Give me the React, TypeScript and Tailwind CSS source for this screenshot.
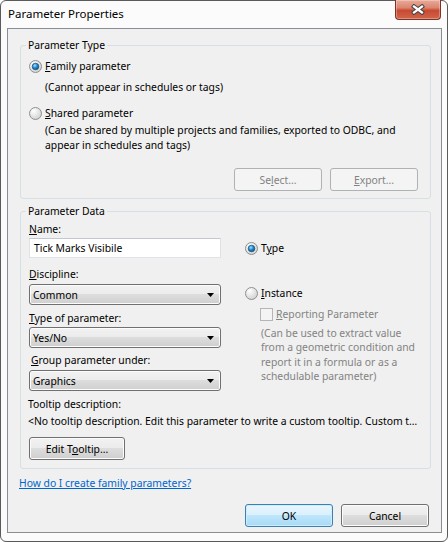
import React from "react";

const btnFace =
  "bg-[linear-gradient(to_bottom,#f2f2f2_0%,#ebebeb_50%,#dddddd_50%,#cfcfcf_100%)] shadow-[inset_0_0_0_1px_#fcfcfc]";

function Radio({ checked }: { checked?: boolean }) {
  return (
    <svg width="13" height="13" viewBox="0 0 13 13" className="shrink-0">
      <defs>
        <radialGradient id="rbFace" cx="35%" cy="30%" r="75%">
          <stop offset="0" stopColor="#ffffff" />
          <stop offset="1" stopColor="#cfd0d0" />
        </radialGradient>
        <radialGradient id="rbDot" cx="40%" cy="35%" r="70%">
          <stop offset="0" stopColor="#a6e6ff" />
          <stop offset="0.45" stopColor="#2a93d8" />
          <stop offset="1" stopColor="#0b457f" />
        </radialGradient>
      </defs>
      <circle cx="6.5" cy="6.5" r="6" fill="url(#rbFace)" stroke="#8e8f8f" />
      {checked && (
        <circle cx="6.5" cy="6.5" r="3.3" fill="url(#rbDot)" stroke="#1b4f7e" strokeWidth="0.7" />
      )}
    </svg>
  );
}

function Select({ value }: { value: string }) {
  return (
    <div
      className={`h-[21px] rounded-[3px] border border-[#707070] ${btnFace} flex items-center justify-between pl-[3px] pr-[6px]`}
    >
      <span>{value}</span>
      <svg width="7" height="4" viewBox="0 0 7 4">
        <path d="M0 0h7L3.5 4z" fill="#000" />
      </svg>
    </div>
  );
}

function Button({
  children,
  variant = "normal",
  className = "",
}: {
  children: React.ReactNode;
  variant?: "normal" | "disabled" | "default";
  className?: string;
}) {
  const look =
    variant === "disabled"
      ? "border-[#adb2b5] bg-[#f4f4f4] text-[#838383]"
      : variant === "default"
        ? "border-[#3c7fb1] bg-[linear-gradient(to_bottom,#eaf6fd_0%,#d9f0fc_50%,#bee6fd_50%,#a7d9f5_100%)] shadow-[inset_0_0_0_1px_#cdeefe]"
        : `border-[#707070] ${btnFace}`;
  return (
    <div
      className={`w-[88px] h-[23px] rounded-[3px] border flex items-center justify-center ${look} ${className}`}
    >
      {children}
    </div>
  );
}

export default function App() {
  return (
    <div className="w-[448px] h-[542px] bg-white font-['Noto_Sans',sans-serif] text-[10.35px] leading-[16px] text-black">
      <div className="h-full border border-[#5a5a5a] rounded-[6px] bg-[#fbfbfb] flex flex-col pl-[6px] pr-[5px] pb-[8px]">
        {/* Title bar */}
        <div className="h-[27px] flex items-start justify-between">
          <div className="pl-[1px] pt-[5px] text-[11.5px]">Parameter Properties</div>
          <div className="-mt-px mr-[1px] w-[46px] h-[20px] rounded-b-[4px] border border-t-0 border-[#7b3328] bg-[linear-gradient(to_bottom,#e9aa98_0%,#db8671_40%,#c84a31_55%,#d0654b_100%)] shadow-[inset_0_0_0_1px_rgba(255,255,255,0.3)] flex items-center justify-center">
            <svg width="14" height="11" viewBox="0 0 14 11">
              <path d="M3 2.5L11 8.5M11 2.5L3 8.5" stroke="#454545" strokeWidth="4.2" strokeLinecap="square" />
              <path d="M3 2.5L11 8.5M11 2.5L3 8.5" stroke="#ffffff" strokeWidth="2.2" strokeLinecap="square" />
            </svg>
          </div>
        </div>

        {/* Client area */}
        <div className="flex-1 border border-[#8a8d93] bg-[#f0f0f0] flex flex-col pl-[12px] pr-[10px]">
          {/* Parameter Type */}
          <fieldset className="mt-[8px] border border-[#d5dfe5] rounded-[3px] pl-[8px] pr-[12px] pt-[5px] pb-[7px]">
            <legend className="ml-[-3px] px-[2px]">Parameter Type</legend>
            <div className="flex items-center gap-[3px] h-[16px]">
              <Radio checked />
              <span>
                <u>F</u>amily parameter
              </span>
            </div>
            <div className="pl-[16px] mt-[5px]">(Cannot appear in schedules or tags)</div>
            <div className="flex items-center gap-[3px] h-[16px] mt-[10px]">
              <Radio />
              <span>
                <u>S</u>hared parameter
              </span>
            </div>
            <div className="pl-[16px] mt-[2px] leading-[15px] whitespace-nowrap">
              <div>(Can be shared by multiple projects and families, exported to ODBC, and</div>
              <div>appear in schedules and tags)</div>
            </div>
            <div className="flex justify-end gap-[8px] mt-[15px]">
              <Button variant="disabled">
                <span>
                  Se<u>l</u>ect...
                </span>
              </Button>
              <Button variant="disabled">
                <span>
                  <u>E</u>xport...
                </span>
              </Button>
            </div>
          </fieldset>

          {/* Parameter Data */}
          <fieldset className="mt-[4px] border border-[#d5dfe5] rounded-[3px] pl-[8px] pr-[12px] pt-[2px] pb-[8px]">
            <legend className="ml-[-3px] px-[2px]">Parameter Data</legend>
            <div className="grid grid-cols-[192px_1fr] gap-x-[24px]">
              <div className="flex flex-col">
                <div>
                  <u>N</u>ame:
                </div>
                <div className="mt-[1px] h-[20px] bg-white border border-[#dfe3e8] border-t-[#c4c8ce] flex items-center pl-[4px]">
                  Tick Marks Visibile
                </div>
                <div className="mt-[8px]">
                  <u>D</u>iscipline:
                </div>
                <div className="mt-[2px]">
                  <Select value="Common" />
                </div>
                <div className="mt-[5px]">
                  <u>T</u>ype of parameter:
                </div>
                <div className="mt-[1px]">
                  <Select value="Yes/No" />
                </div>
                <div className="mt-[4px] pl-[2px]">
                  <u>G</u>roup parameter under:
                </div>
                <div className="mt-[2px]">
                  <Select value="Graphics" />
                </div>
              </div>

              <div className="flex flex-col">
                <div className="mt-[19px] flex items-center gap-[3px] h-[16px]">
                  <Radio checked />
                  <span>
                    T<u>y</u>pe
                  </span>
                </div>
                <div className="mt-[29px] flex items-center gap-[3px] h-[16px]">
                  <Radio />
                  <span>
                    <u>I</u>nstance
                  </span>
                </div>
                <div className="mt-[5px] pl-[15px] flex items-center gap-[3px] h-[16px] text-[#838383]">
                  <div className="w-[13px] h-[13px] border border-[#b5b5b5] bg-[#f4f4f4]" />
                  <span>
                    <u>R</u>eporting Parameter
                  </span>
                </div>
                <div className="mt-[4px] pl-[16px] leading-[14.3px] text-[#838383] whitespace-nowrap">
                  <div>(Can be used to extract value</div>
                  <div>from a geometric condition and</div>
                  <div>report it in a formula or as a</div>
                  <div>schedulable parameter)</div>
                </div>
              </div>
            </div>

            <div className="mt-[5px] -ml-px">Tooltip description:</div>
            <div className="mt-[1px] -ml-px whitespace-nowrap overflow-hidden">
              &lt;No tooltip description. Edit this parameter to write a custom tooltip. Custom t…
            </div>
            <Button className="mt-[8px] w-[96px] h-[21px]">
              <span>
                Edit T<u>o</u>oltip...
              </span>
            </Button>
          </fieldset>

          <div className="mt-[6px] -ml-px text-[#0066cc] underline">How do I create family parameters?</div>

          <div className="mt-[13px] mr-[2px] flex justify-end gap-[8px]">
            <Button variant="default">OK</Button>
            <Button>Cancel</Button>
          </div>
        </div>
      </div>
    </div>
  );
}
